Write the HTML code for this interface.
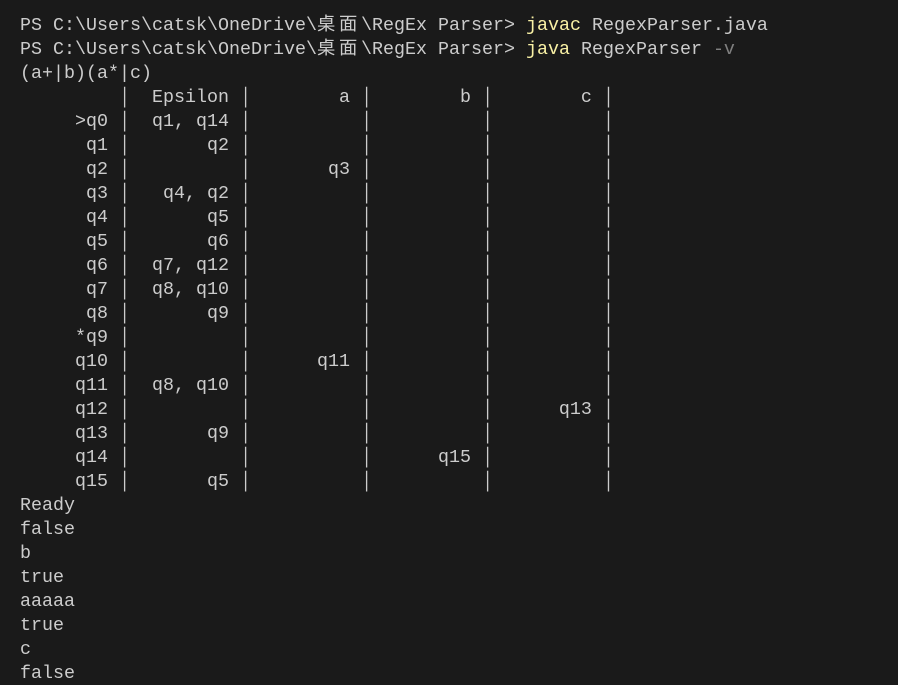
<!DOCTYPE html>
<html><head><meta charset="utf-8"><style>
html,body{margin:0;background:#1a1a1a;width:898px;height:685px;overflow:hidden}
pre{margin:0;padding:14px 0 0 20px;font-family:"Liberation Mono","Noto Sans CJK SC",monospace;font-size:18.33px;line-height:24px;color:#cccccc}
.y{color:#f9f1a5}.g{color:#808080}
.c{display:inline-block;width:44px;letter-spacing:3.67px;overflow:hidden;vertical-align:top}
</style></head><body><pre>PS C:\Users\catsk\OneDrive\<span class="c">桌面</span>\RegEx Parser&gt; <span class="y">javac</span> RegexParser.java
PS C:\Users\catsk\OneDrive\<span class="c">桌面</span>\RegEx Parser&gt; <span class="y">java</span> RegexParser <span class="g">-v</span>
(a+|b)(a*|c)
         │  Epsilon │        a │        b │        c │
     &gt;q0 │  q1, q14 │          │          │          │
      q1 │       q2 │          │          │          │
      q2 │          │       q3 │          │          │
      q3 │   q4, q2 │          │          │          │
      q4 │       q5 │          │          │          │
      q5 │       q6 │          │          │          │
      q6 │  q7, q12 │          │          │          │
      q7 │  q8, q10 │          │          │          │
      q8 │       q9 │          │          │          │
     *q9 │          │          │          │          │
     q10 │          │      q11 │          │          │
     q11 │  q8, q10 │          │          │          │
     q12 │          │          │          │      q13 │
     q13 │       q9 │          │          │          │
     q14 │          │          │      q15 │          │
     q15 │       q5 │          │          │          │
Ready
false
b
true
aaaaa
true
c
false</pre></body></html>
